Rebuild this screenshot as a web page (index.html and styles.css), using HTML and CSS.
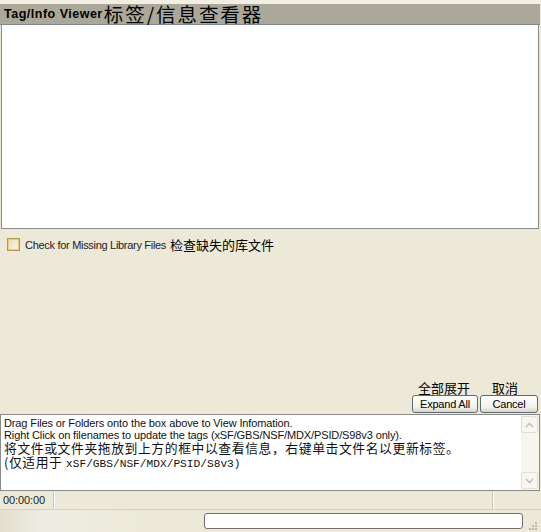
FILE: index.html
```html
<!DOCTYPE html>
<html>
<head>
<meta charset="utf-8">
<link rel="stylesheet" href="styles.css">
</head>
<body>
<div class="app">
  <div class="topstrip"></div>
  <div class="header"><span class="title">Tag/Info Viewer</span><span class="title-cn">标签/信息查看器</span></div>
  <div class="list"></div>
  <div class="check-row">
    <span class="checkbox"></span>
    <span class="check-label">Check for Missing Library Files</span>
    <span class="cn13">检查缺失的库文件</span>
  </div>
  <div class="spacer"></div>
  <div class="btn-labels">
    <span class="cn13 lbl-expand">全部展开</span>
    <span class="cn13 lbl-cancel">取消</span>
  </div>
  <div class="buttons">
    <button class="btn btn-expand">Expand All</button>
    <button class="btn btn-cancel">Cancel</button>
  </div>
  <div class="info">
    <div class="info-text">
      <div class="l1">Drag Files or Folders onto the box above to View Infomation.</div>
      <div class="l1">Right Click on filenames to update the tags (xSF/GBS/NSF/MDX/PSID/S98v3 only).</div>
      <div class="cnline">将文件或文件夹拖放到上方的框中以查看信息，右键单击文件名以更新标签。</div>
      <div class="cnline">(仅适用于 <span class="mono">xSF/GBS/NSF/MDX/PSID/S8v3)</span></div>
    </div>
    <div class="scroll">
      <div class="sbtn">
        <svg width="9" height="6" viewBox="0 0 9 6"><path d="M1 5 L4.5 1.5 L8 5" fill="none" stroke="#B9B9B0" stroke-width="1.3"/></svg>
      </div>
      <div class="strack"></div>
      <div class="sbtn">
        <svg width="9" height="6" viewBox="0 0 9 6"><path d="M1 1 L4.5 4.5 L8 1" fill="none" stroke="#B9B9B0" stroke-width="1.3"/></svg>
      </div>
    </div>
  </div>
  <div class="status">
    <div class="panel time">00:00:00</div>
    <div class="panel mid"></div>
    <div class="panel end"></div>
  </div>
  <div class="bottom">
    <div class="progress"></div>
    <div class="grip">
      <svg width="11" height="11" viewBox="0 0 11 11">
        <g fill="#BDBAA8">
          <rect x="8" y="2" width="2" height="2"/>
          <rect x="5" y="5" width="2" height="2"/>
          <rect x="8" y="5" width="2" height="2"/>
          <rect x="2" y="8" width="2" height="2"/>
          <rect x="5" y="8" width="2" height="2"/>
          <rect x="8" y="8" width="2" height="2"/>
        </g>
      </svg>
    </div>
  </div>
</div>
</body>
</html>
```
FILE: styles.css
```css
html, body {
  margin: 0;
  padding: 0;
}
body {
  width: 541px;
  height: 532px;
  overflow: hidden;
  background: #ECE9D8;
  font-family: "Liberation Sans", Arial, sans-serif;
  font-size: 11px;
  color: #000;
}
.app {
  display: flex;
  flex-direction: column;
  width: 541px;
  height: 532px;
}
.topstrip {
  height: 4px;
  background: #F1EFE4;
  flex: none;
}
.header {
  height: 20px;
  flex: none;
  background: #ACA899;
  border-bottom: 1px solid #7F8A95;
  display: flex;
  align-items: center;
  padding-left: 4px;
  margin-right: 1px;
  white-space: nowrap;
}
.title {
  font-weight: bold;
  font-size: 12.5px;
  letter-spacing: 0.5px;
}
.title-cn {
  font-family: "Noto Sans CJK SC", sans-serif;
  font-size: 19.5px;
  line-height: 20px;
  margin-left: 1px;
  letter-spacing: 1.9px;
}
.list {
  height: 203px;
  flex: none;
  background: #fff;
  border-left: 1px solid #8A8A8A;
  border-right: 1px solid #8A8A8A;
  border-bottom: 1px solid #8A8A8A;
  margin-left: 1px;
  margin-right: 2px;
}
.check-row {
  flex: none;
  height: 17px;
  margin-top: 7px;
  display: flex;
  align-items: center;
  padding-left: 7px;
}
.checkbox {
  width: 11px;
  height: 11px;
  border: 1px solid #B5964E;
  background: linear-gradient(135deg, #E3D9BC, #FAF7EC);
  box-shadow: inset 0 0 0 1px #F2C877;
  margin-right: 5px;
}
.check-label {
  color: #222;
  margin-right: 4px;
  letter-spacing: -0.3px;
}
.cn13 {
  font-family: "Noto Sans CJK SC", sans-serif;
  font-size: 13px;
  line-height: 14px;
}
.spacer {
  flex: 1;
}
.btn-labels {
  flex: none;
  height: 14px;
  position: relative;
}
.lbl-expand {
  position: absolute;
  left: 418px;
  top: 0;
}
.lbl-cancel {
  position: absolute;
  left: 492px;
  top: 0;
}
.buttons {
  flex: none;
  height: 18px;
  display: flex;
  justify-content: flex-end;
  gap: 2px;
  padding-right: 3px;
  margin-bottom: 1px;
}
.btn {
  height: 18px;
  margin: 0;
  padding: 0;
  border: 1px solid #5F6A72;
  border-radius: 3px;
  background: linear-gradient(#FFFFFF, #F2F1EA 70%, #D8D4C6);
  font-family: "Liberation Sans", Arial, sans-serif;
  font-size: 11px;
  color: #000;
  letter-spacing: -0.2px;
}
.btn-expand { width: 66px; }
.btn-cancel { width: 58px; }
.info {
  flex: none;
  height: 75px;
  background: #fff;
  border: 1px solid #8A8A8A;
  margin-right: 1px;
  display: flex;
}
.info-text {
  flex: 1;
  padding: 2px 0 0 3px;
  font-size: 11px;
  line-height: 12px;
  color: #111;
  letter-spacing: -0.12px;
  white-space: nowrap;
  overflow: hidden;
}
.l1 {
  height: 12px;
}
.cnline {
  font-family: "Noto Sans CJK SC", sans-serif;
  font-size: 12.8px;
  line-height: 14px;
  letter-spacing: 0.6px;
  height: 14px;
}
.mono {
  font-family: "Liberation Mono", monospace;
  font-size: 11.2px;
  letter-spacing: 0;
}
.scroll {
  width: 17px;
  flex: none;
  display: flex;
  flex-direction: column;
  background: #F6F5EE;
  padding: 1px 1px 1px 0;
}
.sbtn {
  height: 15px;
  flex: none;
  border: 1px solid #E1DFD4;
  border-radius: 2px;
  background: #F7F6F1;
  display: flex;
  align-items: center;
  justify-content: center;
}
.strack {
  flex: 1;
}
.status {
  flex: none;
  height: 18px;
  display: flex;
  border-bottom: 1px solid #D5D2C1;
}
.panel {
  border-right: 1px solid #C9C6B4;
  box-shadow: 1px 0 0 #FFFFFF;
}
.time {
  width: 50px;
  padding-left: 3px;
  line-height: 18px;
  color: #1B1B1B;
  letter-spacing: -0.1px;
}
.mid {
  flex: 1;
}
.end {
  width: 48px;
  border-right: none;
  box-shadow: none;
}
.bottom {
  flex: none;
  height: 22px;
  display: flex;
  align-items: center;
  justify-content: flex-end;
  background: linear-gradient(90deg, #E2DFCF 0%, #EFEDE2 8%, #ECE9D8 30%);
}
.progress {
  width: 317px;
  height: 14px;
  border: 1px solid #6F6F6F;
  border-radius: 3px;
  background: #fff;
  margin-right: 4px;
}
.grip {
  width: 14px;
  height: 14px;
  display: flex;
  align-items: flex-end;
  margin-top: 6px;
}
```
